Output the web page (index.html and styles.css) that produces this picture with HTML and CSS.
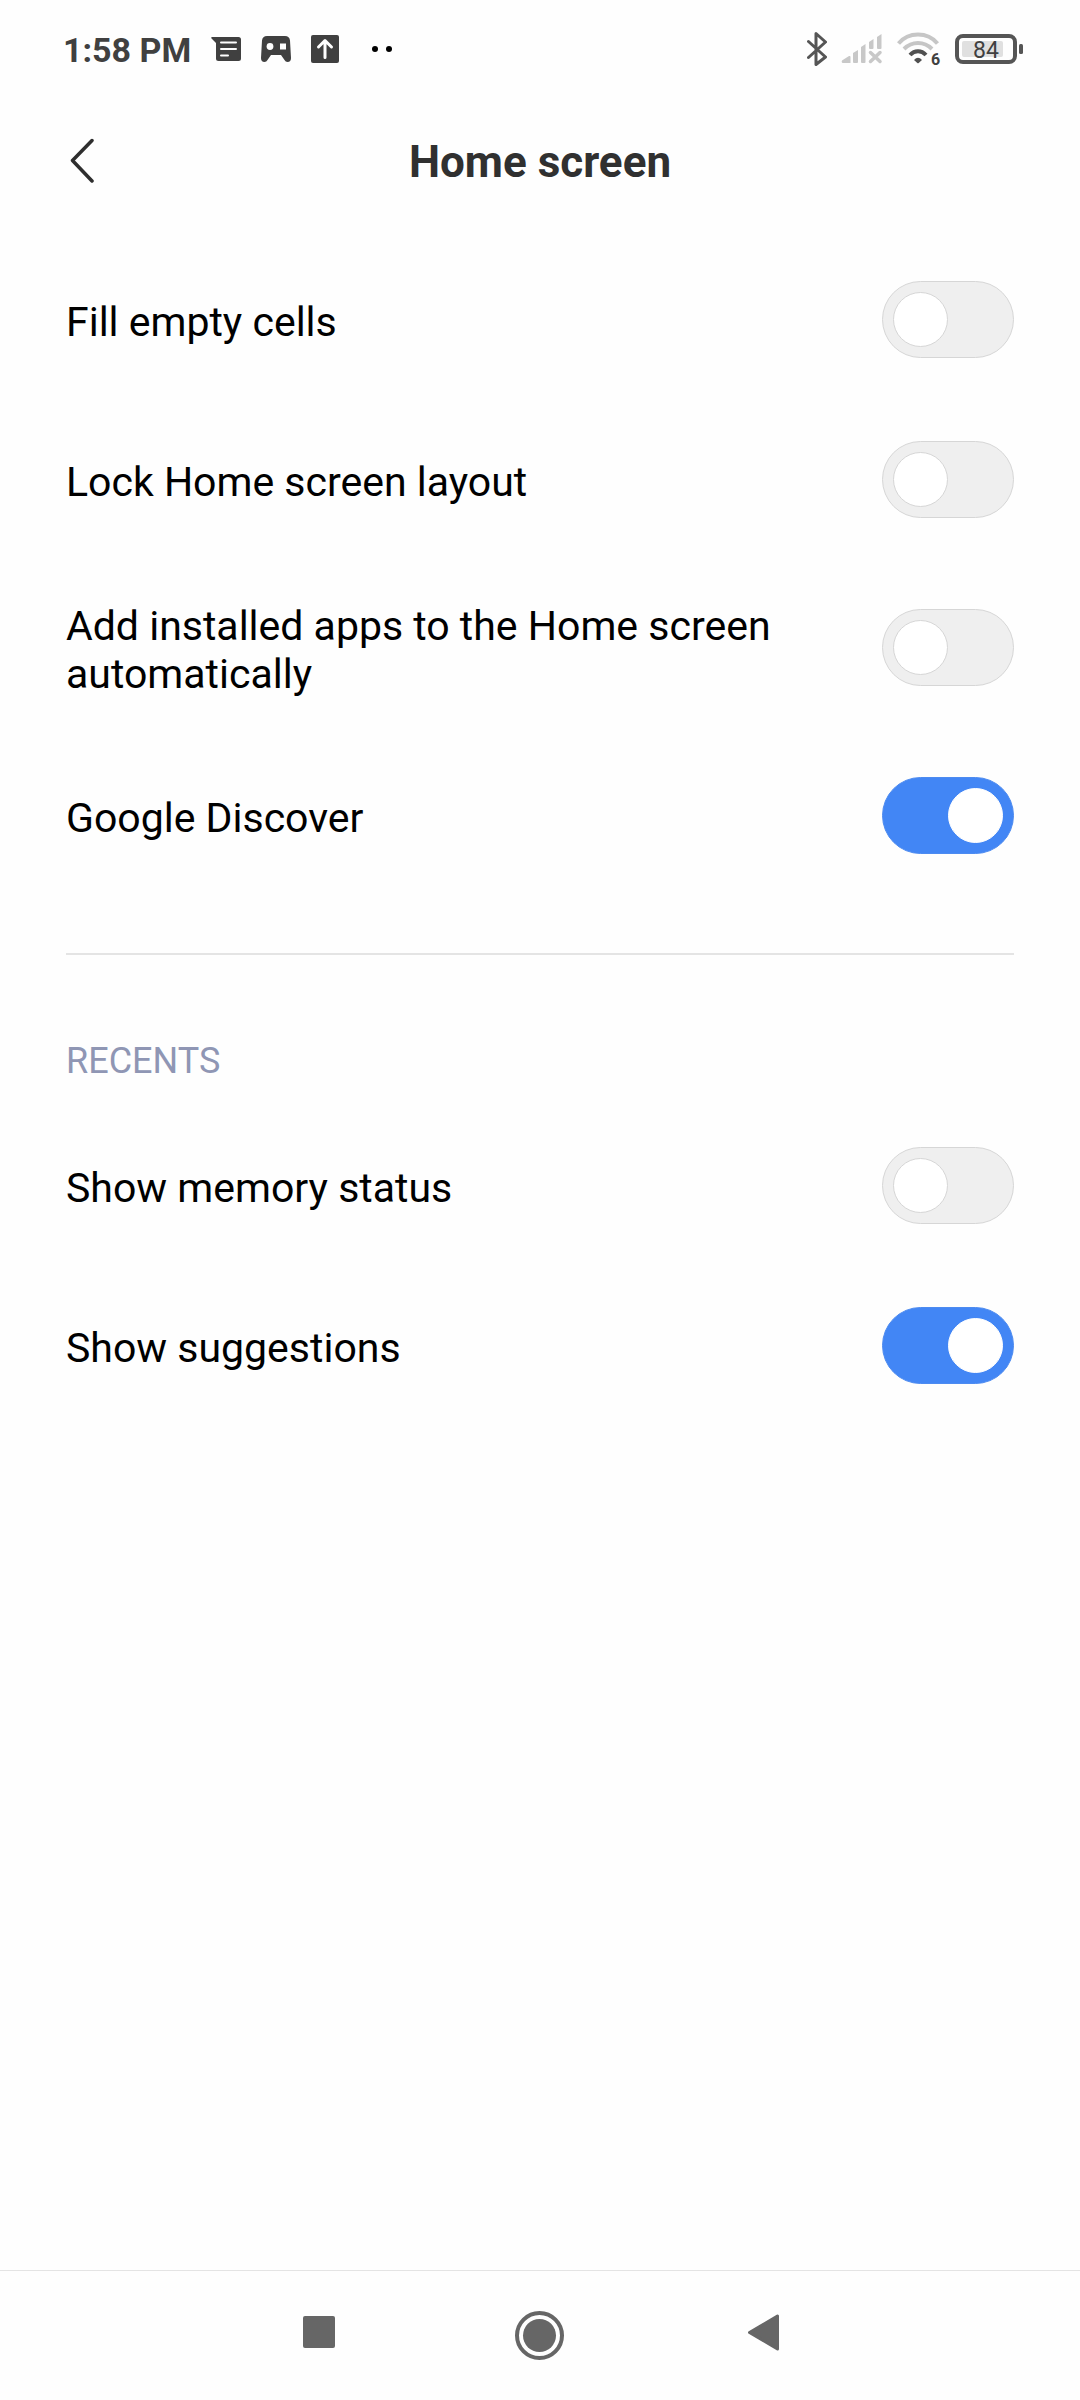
FILE: index.html
```html
<!DOCTYPE html>
<html lang="en">
<head>
<meta charset="utf-8">
<meta name="viewport" content="width=device-width, initial-scale=1">
<title>Home screen</title>
<link rel="stylesheet" href="styles.css">
</head>
<body>
<div class="status-bar">
  <div class="status-left">
    <time class="clock">1:58 PM</time>
    <svg class="icon-message" width="30" height="26" viewBox="0 0 30 26" aria-hidden="true">
      <path fill="#404040" d="M1 1H27.500Q30 1 30 3.500V22.500Q30 25 27.500 25H7.500Q5 25 5 22.500V7L0.300 2.300Q0 1 1 1Z"/>
      <path stroke="#fefefe" stroke-width="2" stroke-linecap="round" d="M10 6.500H25M10 13H25M10 19.500H17"/>
    </svg>
    <svg class="icon-game" width="30" height="26" viewBox="0 0 30 26" aria-hidden="true">
      <path fill="#404040" d="M6 0H24Q28.500 0 29 4.500L30 22Q30 26 26.500 26Q24.500 26 23.500 24L20 19H10L6.500 24Q5.500 26 3.500 26Q0 26 0 22L1 4.500Q1.500 0 6 0Z"/>
      <circle cx="9" cy="10.500" r="3.400" fill="#fefefe"/>
      <rect x="19" y="7.500" width="6" height="6" fill="#fefefe"/>
    </svg>
    <svg class="icon-upload" width="28" height="28" viewBox="0 0 28 28" aria-hidden="true">
      <rect width="28" height="28" rx="2" fill="#404040"/>
      <path fill="none" stroke="#fefefe" stroke-width="3" stroke-linecap="round" stroke-linejoin="round" d="M14 22.500V6M7.500 12L14 5.500L20.500 12"/>
    </svg>
    <svg class="icon-more" width="20" height="6" viewBox="0 0 20 6" aria-hidden="true">
      <circle cx="3" cy="3" r="3"/><circle cx="17" cy="3" r="3"/>
    </svg>
  </div>
  <div class="status-right">
    <svg width="20" height="34" viewBox="0 0 20 34" aria-hidden="true">
      <path fill="none" stroke="#555" stroke-width="3" stroke-linecap="round" stroke-linejoin="round" d="M1.500 9.500L18.500 25L9 32.500V1.500L18.500 10L1.500 25.500"/>
    </svg>
    <svg class="icon-signal" width="42" height="30" viewBox="0 0 42 30" aria-hidden="true">
      <g fill="#c8c8c8">
        <path d="M1 26.500L8 22Q9.500 21.500 9.500 23V29H1.500Q0 28 1 26.500Z"/>
        <path d="M12 19L17 16V28Q17 29 16 29H13Q12 29 12 28Z"/>
        <path d="M20 13L24.500 10V28Q24.500 29 23.500 29H21Q20 29 20 28Z"/>
        <path d="M28 8L32.500 5V14Q32.500 15 31.500 15H29Q28 15 28 14Z"/>
        <path d="M36 3L40.500 0V14Q40.500 15 39.500 15H37Q36 15 36 14Z"/>
      </g>
      <path stroke="#c8c8c8" stroke-width="3.500" stroke-linecap="round" d="M29.500 18.500L39 27.500M39 18.500L29.500 27.500"/>
    </svg>
    <svg class="icon-wifi" width="48" height="42" viewBox="0 -4 48 42" aria-hidden="true">
      <g fill="none" stroke-width="4">
        <path stroke="#c6c6c6" d="M1.500 11.500Q9 2.500 21 2.500T40.500 11.500"/>
        <path stroke="#c6c6c6" d="M7 17Q13 11 21 11T35 17"/>
        <path stroke="#505050" d="M13 23Q16.500 19.200 21 19.200T29 23"/>
      </g>
      <path fill="#505050" d="M17 28Q21 23.500 25 28L21.700 31Q21 31.500 20.300 31Z"/>
      <text x="34" y="33" class="wifi-text">6</text>
    </svg>
    <svg class="icon-battery" width="68" height="30" viewBox="0 0 68 30" role="img" aria-label="Battery 84 percent">
      <rect x="2" y="2" width="58" height="26" rx="6" fill="none" stroke="#555" stroke-width="4"/>
      <rect x="7" y="7" width="41" height="16" rx="2" fill="#e0e0e0"/>
      <rect x="64" y="10" width="4" height="10" rx="1.500" fill="#555"/>
      <text x="31" y="24" class="battery-text">84</text>
    </svg>
  </div>
</div>

<header class="app-bar">
  <button class="back" type="button" aria-label="Back">
    <svg width="28" height="46" viewBox="0 0 28 46" aria-hidden="true">
      <path fill="none" stroke="#2e2e2e" stroke-width="3.500" stroke-linecap="round" stroke-linejoin="round" d="M26 2.500L6.500 22.500L26 43"/>
    </svg>
  </button>
  <h1 class="title">Home screen</h1>
</header>

<main class="settings">
  <section class="group">
    <label class="row"><span class="name">Fill empty cells</span><input class="switch" type="checkbox" role="switch"></label>
    <label class="row"><span class="name">Lock Home screen layout</span><input class="switch" type="checkbox" role="switch"></label>
    <label class="row"><span class="name">Add installed apps to the Home screen automatically</span><input class="switch" type="checkbox" role="switch"></label>
    <label class="row"><span class="name">Google Discover</span><input class="switch" type="checkbox" role="switch" checked></label>
  </section>
  <section class="group group-recents">
    <h2 class="group-title">RECENTS</h2>
    <label class="row"><span class="name">Show memory status</span><input class="switch" type="checkbox" role="switch"></label>
    <label class="row"><span class="name">Show suggestions</span><input class="switch" type="checkbox" role="switch" checked></label>
  </section>
</main>

<nav class="nav-bar">
  <button class="nav-button" type="button" aria-label="Recent apps">
    <svg width="60" height="60" viewBox="0 0 60 60" aria-hidden="true"><rect x="15" y="10" width="32" height="32" rx="2" fill="#666"/></svg>
  </button>
  <button class="nav-button" type="button" aria-label="Home">
    <svg width="60" height="60" viewBox="0 0 60 60" aria-hidden="true"><circle cx="29.500" cy="29.500" r="22.500" fill="none" stroke="#666" stroke-width="4"/><circle cx="29.500" cy="29.500" r="16.500" fill="#666"/></svg>
  </button>
  <button class="nav-button" type="button" aria-label="Back">
    <svg width="60" height="60" viewBox="0 0 60 60" aria-hidden="true"><path fill="#666" stroke="#666" stroke-width="3" stroke-linejoin="round" d="M17.500 26.500L45.500 10V43Z"/></svg>
  </button>
</nav>
</body>
</html>
```

FILE: styles.css
```css
*,
*::before {
  box-sizing: border-box;
}

body {
  display: flex;
  flex-direction: column;
  min-height: 100vh;
  margin: 0;
  background: #fefefe;
  color: #000;
  font-family: Roboto, "Noto Sans", sans-serif;
}

svg {
  display: block;
  flex: none;
}

button {
  padding: 0;
  border: 0;
  background: none;
}

/* Status bar */
.status-bar {
  display: flex;
  align-items: center;
  justify-content: space-between;
  height: 98px;
  padding: 0 57px 0 63px;
}

.status-left,
.status-right {
  display: flex;
  align-items: center;
}

.clock {
  padding-top: 2px;
  color: #404040;
  font-size: 34px;
  font-weight: 700;
  line-height: 40px;
}

.icon-message {
  margin-left: 20px;
}

.icon-game {
  margin-left: 20px;
}

.icon-upload {
  margin-left: 20px;
}

.icon-more {
  margin-left: 33px;
}

.icon-signal {
  margin-left: 14px;
}

.icon-wifi {
  margin-left: 14px;
}

.icon-battery {
  margin-left: 10px;
}

.wifi-text {
  fill: #404040;
  font-size: 16px;
  font-weight: 700;
}

.battery-text {
  fill: #404040;
  font-size: 23px;
  font-weight: 400;
  text-anchor: middle;
}

/* App bar */
.app-bar {
  display: grid;
  grid-template-columns: 60px 1fr 60px;
  align-items: center;
  height: 126px;
  padding: 0 66px;
}

.title {
  margin: 0;
  padding-top: 2px;
  color: #303030;
  font-size: 44px;
  font-weight: 700;
  line-height: 52px;
  text-align: center;
}

/* Settings list */
.settings {
  flex: 1;
  padding: 16px 66px 0;
}

.row {
  display: flex;
  align-items: center;
  justify-content: space-between;
  gap: 60px;
  min-height: 160px;
  padding: 37px 0 38px;
}

.name {
  padding-top: 5px;
  font-size: 41px;
  line-height: 48px;
}

.switch {
  appearance: none;
  display: flex;
  flex: none;
  width: 132px;
  height: 77px;
  margin: 0;
  padding: 10px;
  border: 1px solid #d6d6d6;
  border-radius: 39px;
  background: #efefef;
}

.switch::before {
  content: "";
  width: 55px;
  height: 55px;
  border: 1px solid #d6d6d6;
  border-radius: 50%;
  background: #fff;
}

.switch:checked {
  justify-content: flex-end;
  border-color: #4d8bf0;
  background: #4286f5;
}

.switch:checked::before {
  border-color: #fff;
}

.group-recents {
  margin-top: 57px;
  border-top: 2px solid #e4e4e4;
}

.group-title {
  margin: 0;
  padding: 84px 0 23px;
  color: #8f96b4;
  font-size: 36px;
  font-weight: 400;
  line-height: 44px;
}

/* Navigation bar */
.nav-bar {
  display: flex;
  align-items: center;
  justify-content: center;
  gap: 162px;
  height: 130px;
  border-top: 1px solid #e4e4e4;
}
```
